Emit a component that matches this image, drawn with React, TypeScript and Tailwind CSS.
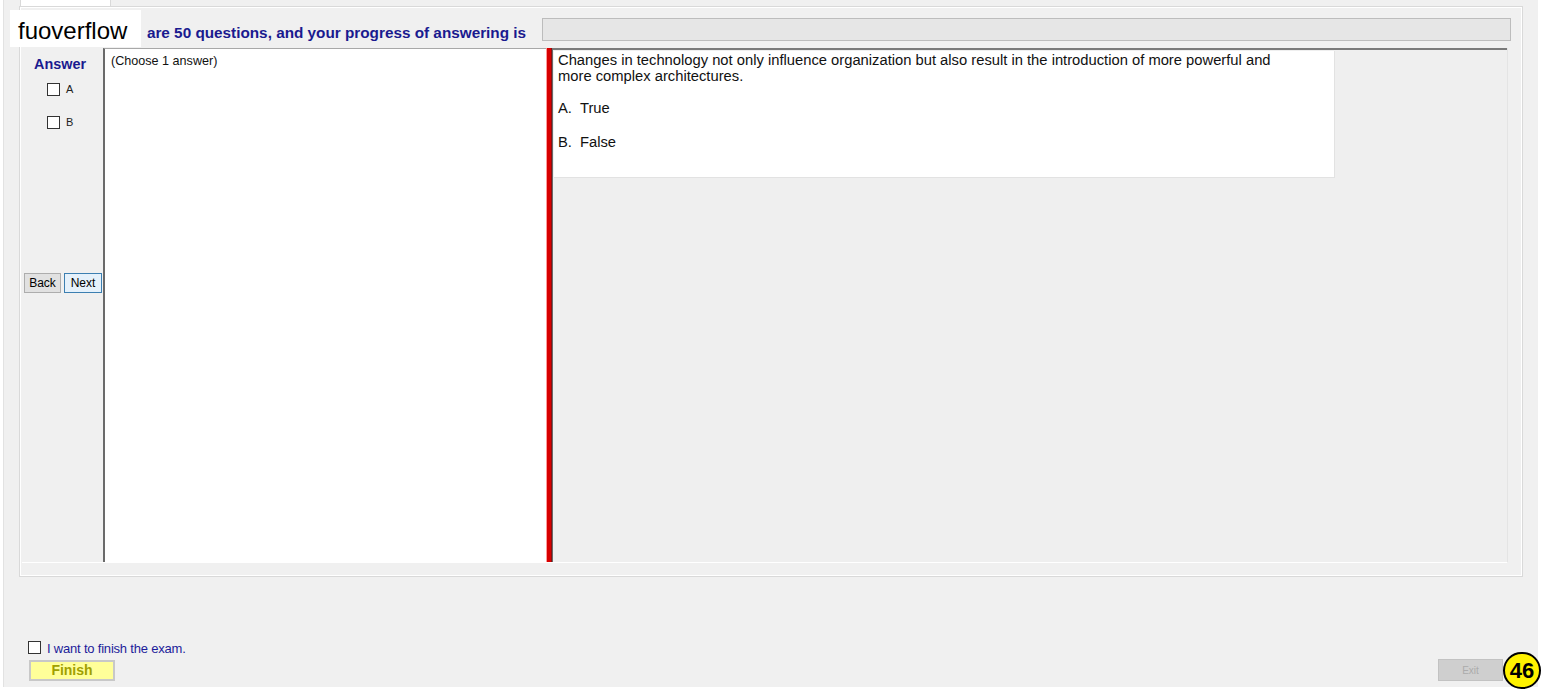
import React from "react";

export default function App() {
  return (
    <div
      className="w-[1542px] h-[690px] bg-white overflow-hidden relative"
      style={{ fontFamily: '"Liberation Sans", Arial, sans-serif' }}
    >
      <div className="ml-[3px] w-[1535px] h-[687px] bg-[#f0f0f0] border-l border-[#e2e2e2] flex flex-col">
        {/* tab header */}
        <div className="h-[6px] flex">
          <div className="ml-[16px] w-[91px] h-[7px] bg-white border-x border-[#d9d9d9]" />
        </div>
        {/* tab page */}
        <div className="ml-[15px] w-[1504px] h-[571px] border border-[#d9d9d9] flex flex-col">
          <div className="flex-1 border border-white flex flex-col">
            {/* header row */}
            <div className="mt-[10px] h-[23px] flex">
              <div className="pl-[75px] pt-[6px] text-[15.3px] leading-[17px] font-bold text-[#1a1a8f] whitespace-nowrap">
                There<span className="pl-[5px]"> are 50 questions, and your progress of answering is</span>
              </div>
              <div className="ml-auto mr-[10px] w-[969px] h-[23px] bg-[#e6e6e6] border border-[#bcbcbc]" />
            </div>
            {/* content row */}
            <div className="mt-[7px] ml-[1px] w-[1486px] h-[515px] flex border-r border-[#e4e4e4] border-b border-b-white">
              {/* left column */}
              <div className="w-[81px] flex flex-col">
                <div className="pl-[12px] pt-[8px] text-[14.4px] leading-[16px] font-bold text-[#1a1a8f]">
                  Answer
                </div>
                <div className="mt-[11px] flex items-center pl-[25px]">
                  <div className="w-[13px] h-[13px] bg-white border border-[#333]" />
                  <span className="ml-[6px] text-[11px] leading-[13px] text-[#222]">A</span>
                </div>
                <div className="mt-[20px] flex items-center pl-[25px]">
                  <div className="w-[13px] h-[13px] bg-white border border-[#333]" />
                  <span className="ml-[6px] text-[11px] leading-[13px] text-[#222]">B</span>
                </div>
                <div className="mt-[144px] flex gap-[3px] pl-[2px]">
                  <div className="w-[37px] h-[20px] bg-[#e1e1e1] border border-[#adadad] text-[12px] text-black flex items-center justify-center">
                    Back
                  </div>
                  <div className="w-[38px] h-[20px] bg-[#e5f1fb] border border-[#3c7fb1] text-[12px] text-black flex items-center justify-center">
                    Next
                  </div>
                </div>
              </div>
              {/* left white panel */}
              <div className="w-[443px] bg-white border-l-2 border-[#6a6a6a] border-t border-t-[#a8a8a8] pl-[6px] pt-[5px] text-[12.6px] leading-[15px] text-[#111]">
                (Choose 1 answer)
              </div>
              {/* splitter */}
              <div className="w-[6px] bg-[#d80000] border-l border-[#ff9a9a] border-r border-r-[#8a1010]" />
              {/* right panel */}
              <div className="flex-1 bg-[#efefef] border-t-2 border-[#7a7a7a] border-l border-l-[#6a6a6a] pl-[1px] pt-[1px]">
                <div className="w-[781px] h-[127px] bg-white border-r border-b border-[#e2e2e2] pl-[4px] pt-[1px] text-[14.75px] leading-[16px] text-[#111]">
                  <div>
                    Changes in technology not only influence organization but also result in the introduction of more powerful and
                    <br />
                    more complex architectures.
                  </div>
                  <div className="mt-[16px] flex">
                    <span className="w-[22px]">A.</span>
                    <span>True</span>
                  </div>
                  <div className="mt-[18px] flex">
                    <span className="w-[22px]">B.</span>
                    <span>False</span>
                  </div>
                </div>
              </div>
            </div>
          </div>
        </div>
        {/* bottom area */}
        <div className="flex-1 flex items-end justify-between pb-[6px] pl-[24px] pr-[35px]">
          <div className="flex flex-col">
            <div className="flex items-end">
              <div className="w-[13px] h-[13px] bg-white border border-[#333] mb-[2px]" />
              <span className="ml-[6px] text-[13px] leading-[15px] text-[#1c1c9a] tracking-[-0.2px]">
                I want to finish the exam.
              </span>
            </div>
            <div className="mt-[4px] ml-[1px] w-[86px] h-[21px] bg-[#ffff99] border-2 border-[#c8c8c8] text-[14px] font-bold text-[#a0a000] flex items-center justify-center">
              Finish
            </div>
          </div>
          <div className="w-[65px] h-[22px] bg-[#cfcfcf] border border-[#c2c2c2] text-[10px] text-[#ababab] flex items-center justify-center">
            Exit
          </div>
        </div>
      </div>

      {/* watermark */}
      <div className="absolute z-20 left-[10px] top-[10px] w-[131px] h-[37px] bg-white flex items-center pl-[8px] pt-[5px] text-[24px] text-black">
        fuoverflow
      </div>
      {/* badge */}
      <div className="absolute z-20 left-[1503px] top-[652px] w-[38px] h-[37px] rounded-full bg-[#fff200] border-2 border-black flex items-center justify-center text-[22px] font-bold text-black">
        46
      </div>
    </div>
  );
}
